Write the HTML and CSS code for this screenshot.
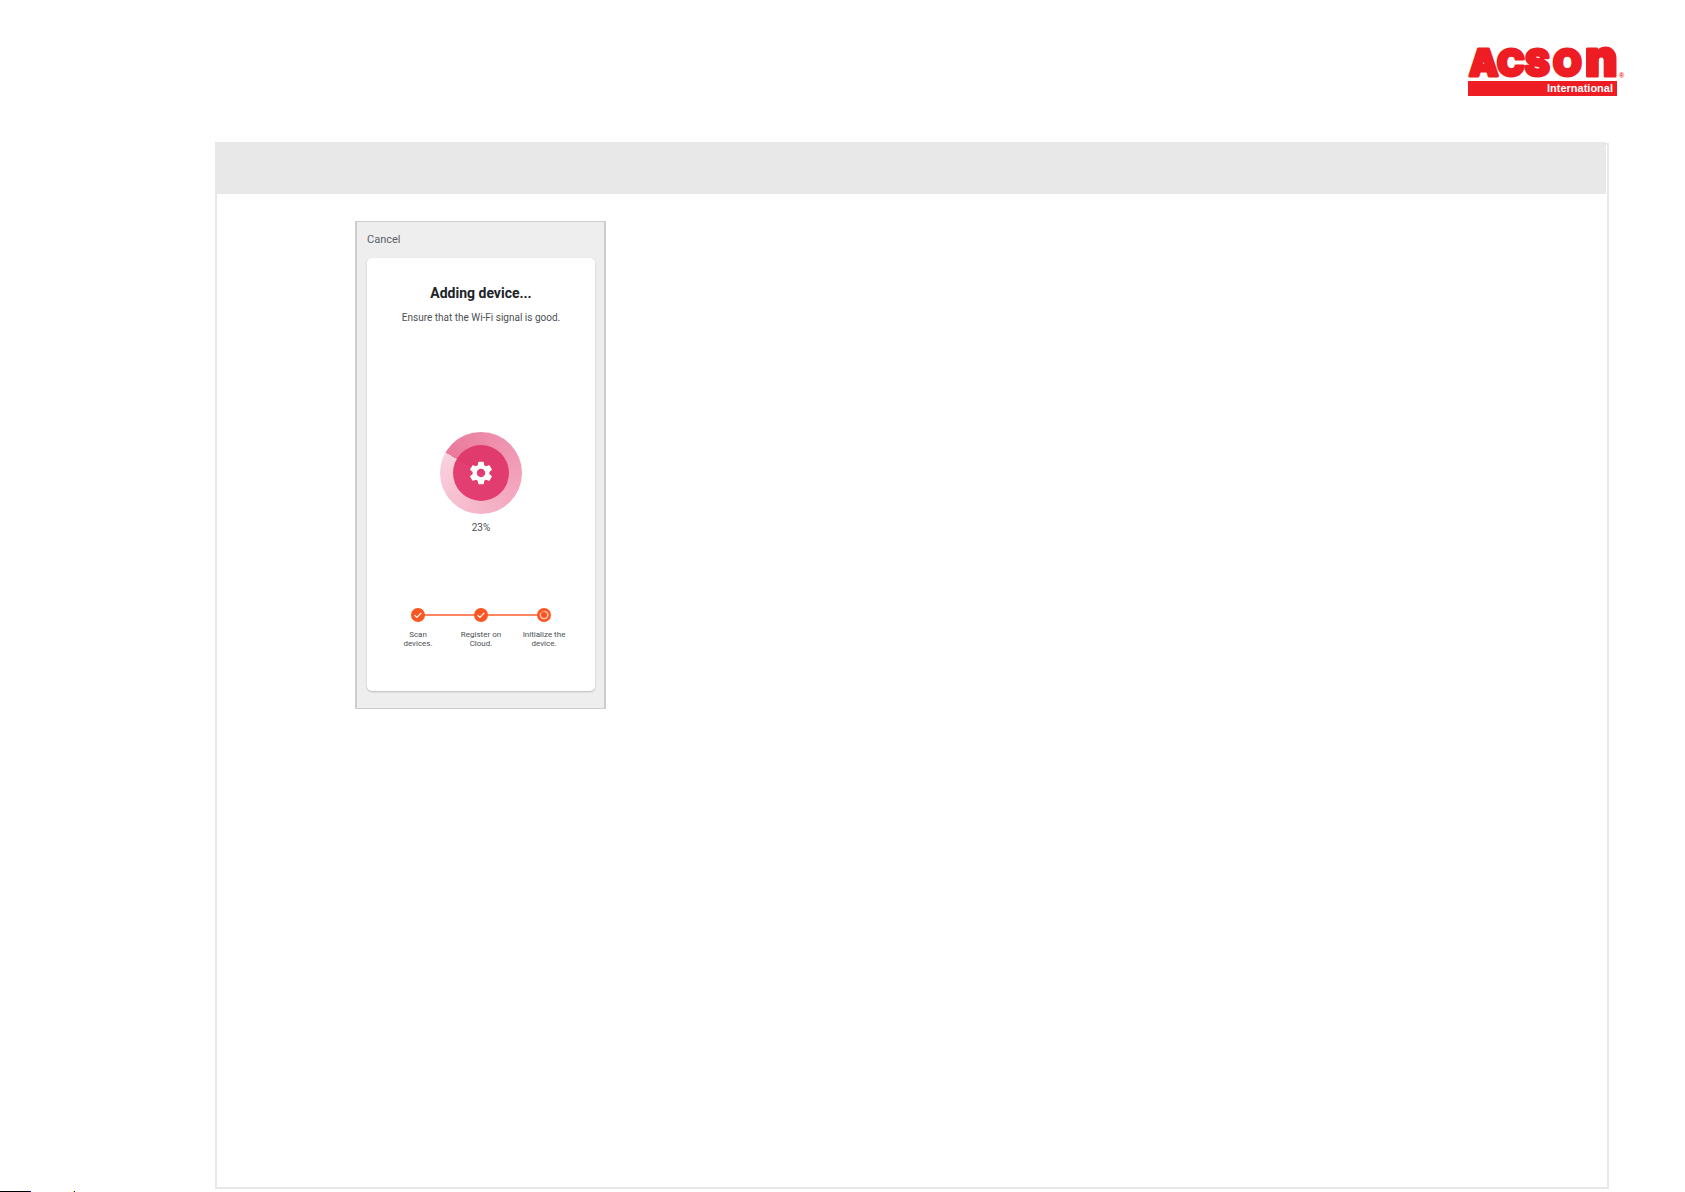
FILE: index.html
```
<!DOCTYPE html>
<html lang="en">
<head>
    <meta charset="UTF-8">
    <meta name="viewport" content="width=device-width, initial-scale=1.0">
    <title>Adding device</title>
    <link rel="stylesheet" href="styles.css">
</head>
<body>

    <header class="header">
        <svg class="logo" width="157" height="48" viewBox="0 0 157 48" role="img" aria-label="Acson International">
            <text class="logo-name" y="28" font-size="37"><tspan x="1 29 57 85">ACSO</tspan><tspan x="117" font-size="50">n</tspan></text>
            <rect class="logo-band" x="0" y="33" width="149" height="15"/>
            <text class="logo-sub" x="145" y="44" text-anchor="end">International</text>
            <text class="logo-mark" x="151" y="30">®</text>
        </svg>
    </header>

    <main class="panel">
        <div class="panel-bar"></div>

        <section class="phone">
            <button class="btn-cancel" type="button">Cancel</button>

            <div class="card">
                <h1 class="title">Adding device...</h1>
                <p class="subtitle">Ensure that the Wi-Fi signal is good.</p>

                <div class="wheel">
                    <div class="wheel-core">
                        <svg width="28" height="28" viewBox="0 0 24 24" fill="#fff" aria-hidden="true">
                            <path d="M19.14 12.94c.04-.3.06-.61.06-.94 0-.32-.02-.64-.07-.94l2.03-1.58c.18-.14.23-.41.12-.61l-1.92-3.32c-.12-.22-.37-.29-.59-.22l-2.39.96c-.5-.38-1.03-.7-1.62-.94l-.36-2.54c-.04-.24-.24-.41-.48-.41h-3.84c-.24 0-.43.17-.47.41l-.36 2.54c-.59.24-1.13.57-1.62.94l-2.39-.96c-.22-.08-.47 0-.59.22L2.74 8.87c-.12.21-.08.47.12.61l2.03 1.58c-.05.3-.09.63-.09.94s.02.64.07.94l-2.03 1.58c-.18.14-.23.41-.12.61l1.92 3.32c.12.22.37.29.59.22l2.39-.96c.5.38 1.03.7 1.62.94l.36 2.54c.05.24.24.41.48.41h3.84c.24 0 .44-.17.47-.41l.36-2.54c.59-.24 1.13-.56 1.62-.94l2.39.96c.22.08.47 0 .59-.22l1.92-3.32c.12-.22.07-.47-.12-.61l-2.01-1.58zM12 15.6c-1.98 0-3.6-1.62-3.6-3.6s1.62-3.6 3.6-3.6 3.6 1.62 3.6 3.6-1.62 3.6-3.6 3.6z"/>
                        </svg>
                    </div>
                </div>
                <div class="percent">23%</div>

                <ol class="steps">
                    <li class="step">
                        <svg class="step-icon" width="14" height="14" viewBox="0 0 14 14" aria-hidden="true">
                            <circle cx="7" cy="7" r="7" fill="#fc5622"/>
                            <path d="M3.6 7.2l2.3 2.2 4.4-4.5" fill="none" stroke="#fff" stroke-width="1.3"/>
                        </svg>
                        <span>Scan devices.</span>
                    </li>
                    <li class="step">
                        <svg class="step-icon" width="14" height="14" viewBox="0 0 14 14" aria-hidden="true">
                            <circle cx="7" cy="7" r="7" fill="#fc5622"/>
                            <path d="M3.6 7.2l2.3 2.2 4.4-4.5" fill="none" stroke="#fff" stroke-width="1.3"/>
                        </svg>
                        <span>Register on Cloud.</span>
                    </li>
                    <li class="step">
                        <svg class="step-icon" width="14" height="14" viewBox="0 0 14 14" aria-hidden="true">
                            <circle cx="7" cy="7" r="7" fill="#fc5622"/>
                            <circle cx="7" cy="7" r="3.7" fill="none" stroke="#ff8a66" stroke-width="1.2"/>
                            <path d="M7.6 3.3A3.7 3.7 0 0 1 7 10.7A3.7 3.7 0 0 1 3.6 5.6" fill="none" stroke="#ffd0c0" stroke-width="1.2"/>
                        </svg>
                        <span>Initialize the device.</span>
                    </li>
                </ol>
            </div>
        </section>
    </main>

    <footer class="edge">
        <span class="edge-line"></span>
        <span class="edge-dot"></span>
    </footer>

</body>
</html>
```

FILE: styles.css
```
* {
    margin: 0;
    padding: 0;
    box-sizing: border-box;
}

body {
    font-family: Roboto, sans-serif;
    background-color: #fff;
    color: #4c5054;
    min-height: 100vh;
    display: flex;
    flex-direction: column;
}

.header {
    display: flex;
    justify-content: flex-end;
    padding: 48px 60px 47px;
}

.logo {
    display: block;
    overflow: visible;
}

.logo-name {
    font-family: Inter, sans-serif;
    font-weight: 900;
    fill: #ee1c23;
    stroke: #ee1c23;
    stroke-width: 3;
    stroke-linejoin: round;
}

.logo-band {
    fill: #ee1c23;
}

.logo-sub {
    font-family: "Liberation Sans", sans-serif;
    font-size: 11px;
    font-weight: 700;
    fill: #fff;
}

.logo-mark {
    font-family: "Liberation Sans", sans-serif;
    font-size: 7px;
    font-weight: 700;
    fill: #ee1c23;
}

.panel {
    flex: 1;
    margin: 0 76px 2px 215px;
    border: 2px solid #e8e8e8;
}

.panel-bar {
    height: 52px;
    margin: -3px 1px 0 -2px;
    background: #e8e8e8;
}

.phone {
    width: 251px;
    margin: 27px 0 0 138px;
    padding: 10px 9px 17px 10px;
    background: #eee;
    border: 2px solid #cdcdcd;
    border-width: 1px 2px;
}

.btn-cancel {
    display: block;
    border: none;
    background: none;
    font: 11px/16px Roboto, sans-serif;
    color: #5c6165;
    cursor: pointer;
}

.card {
    display: flex;
    flex-direction: column;
    align-items: center;
    margin-top: 10px;
    padding: 26px 16px 43px;
    background: #fff;
    border-radius: 5px;
    box-shadow: 0 1px 2px #bbb;
}

.title {
    font-size: 14px;
    line-height: 18px;
    color: #202328;
}

.subtitle {
    margin-top: 8px;
    font-size: 10px;
    line-height: 16px;
    white-space: nowrap;
}

.wheel {
    display: flex;
    align-items: center;
    justify-content: center;
    width: 82px;
    height: 82px;
    margin-top: 106px;
    border-radius: 50%;
    background: conic-gradient(from 300deg, #ea7a9c, #f4a7bf 50%, #f9d2de);
}

.wheel-core {
    display: flex;
    align-items: center;
    justify-content: center;
    width: 56px;
    height: 56px;
    border-radius: 50%;
    background: conic-gradient(from 300deg, #e03a6c, #e43f73);
}

.percent {
    margin-top: 6px;
    font-size: 10px;
    line-height: 16px;
}

.steps {
    display: flex;
    list-style: none;
    margin-top: 72px;
}

.step {
    position: relative;
    display: flex;
    flex-direction: column;
    align-items: center;
    gap: 8px;
    width: 63px;
    padding: 0 8px;
    font-size: 8px;
    line-height: 9px;
    text-align: center;
}

/* connector to the next step, drawn under the icons */
.step:not(:last-child)::after {
    content: "";
    position: absolute;
    top: 6px;
    left: 50%;
    width: 100%;
    height: 2px;
    background: #ff8460;
}

.step-icon {
    position: relative;
    z-index: 1;
}

.edge {
    display: flex;
    gap: 42px;
    height: 1px;
}

.edge-line {
    width: 31px;
    background: #000;
    border-right: 1px solid #00f;
}

.edge-dot {
    width: 2px;
    border-left: 1px solid #ff0;
    border-right: 1px solid #00f;
}
```
